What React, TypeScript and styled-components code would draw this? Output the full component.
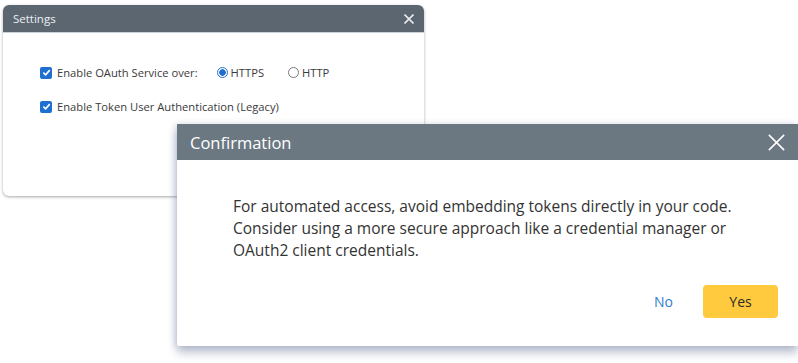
import styled, { createGlobalStyle } from 'styled-components';

const GlobalStyle = createGlobalStyle`
  html, body {
    margin: 0;
    padding: 0;
    background: #ffffff;
    font-family: "Open Sans", "Noto Sans", sans-serif;
    color: #333333;
  }
`;

export default function App() {
  return (
    <Desktop>
      <GlobalStyle />
      <SettingsWindow>
        <SettingsHeader>
          <SettingsTitle>Settings</SettingsTitle>
          <CloseIcon size={10} stroke={1.6} color="#e8ecef" />
        </SettingsHeader>
        <SettingsBody>
          <OptionRow>
            <Checkbox />
            <OptionLabel>Enable OAuth Service over:</OptionLabel>
            <RadioGroup>
              <RadioOption>
                <Radio checked />
                <span>HTTPS</span>
              </RadioOption>
              <RadioOption>
                <Radio />
                <span>HTTP</span>
              </RadioOption>
            </RadioGroup>
          </OptionRow>
          <OptionRow>
            <Checkbox />
            <OptionLabel>Enable Token User Authentication (Legacy)</OptionLabel>
          </OptionRow>
        </SettingsBody>
      </SettingsWindow>

      <ConfirmWindow>
        <ConfirmHeader>
          <ConfirmTitle>Confirmation</ConfirmTitle>
          <CloseIcon size={17} stroke={1.5} color="#ffffff" />
        </ConfirmHeader>
        <ConfirmBody>
          <Message>
            For automated access, avoid embedding tokens directly in your code.
            <br />
            Consider using a more secure approach like a credential manager or
            <br />
            OAuth2 client credentials.
          </Message>
          <Actions>
            <TextButton>No</TextButton>
            <PrimaryButton>Yes</PrimaryButton>
          </Actions>
        </ConfirmBody>
      </ConfirmWindow>
    </Desktop>
  );
}

function CloseIcon({ size, stroke, color }: { size: number; stroke: number; color: string }) {
  return (
    <svg width={size} height={size} viewBox="0 0 10 10" fill="none">
      <path d="M0.5 0.5 L9.5 9.5 M9.5 0.5 L0.5 9.5" stroke={color} strokeWidth={(stroke * 10) / size} />
    </svg>
  );
}

function Checkbox() {
  return (
    <CheckBoxBox>
      <svg width="9" height="9" viewBox="0 0 10 10" fill="none">
        <path d="M1.5 5.2 L4 7.6 L8.6 2.4" stroke="#ffffff" strokeWidth="1.8" />
      </svg>
    </CheckBoxBox>
  );
}

const Desktop = styled.div`
  position: relative;
  width: 798px;
  height: 363px;
  overflow: hidden;
  background: #ffffff;
`;

const SettingsWindow = styled.div`
  position: absolute;
  left: 3px;
  top: 5px;
  width: 421px;
  height: 191px;
  background: #ffffff;
  border-radius: 6px;
  overflow: hidden;
  box-shadow: 0 1px 3px rgba(0, 0, 0, 0.35);
  display: flex;
  flex-direction: column;
`;

const SettingsHeader = styled.div`
  height: 27px;
  background: #5b6670;
  display: flex;
  align-items: center;
  justify-content: space-between;
  padding: 0 10px 0 10px;
  border-bottom: 1px solid #c8d0d8;
`;

const SettingsTitle = styled.span`
  color: #eef1f3;
  font-size: 11.5px;
`;

const SettingsBody = styled.div`
  padding: 28px 0 0 37px;
  display: flex;
  flex-direction: column;
  gap: 11px;
`;

const OptionRow = styled.div`
  display: flex;
  align-items: center;
  height: 23px;
  font-size: 11.2px;
  color: #3a3a3a;
`;

const CheckBoxBox = styled.span`
  width: 12px;
  height: 12px;
  border-radius: 2px;
  background: #1f6fd1;
  display: inline-flex;
  align-items: center;
  justify-content: center;
  margin-right: 5px;
`;

const OptionLabel = styled.span`
  white-space: nowrap;
`;

const RadioGroup = styled.div`
  display: flex;
  gap: 24px;
  margin-left: 19px;
`;

const RadioOption = styled.label`
  display: flex;
  align-items: center;
  gap: 3px;
`;

const Radio = styled.span<{ checked?: boolean }>`
  width: 11px;
  height: 11px;
  box-sizing: border-box;
  border-radius: 50%;
  border: 1px solid ${(p) => (p.checked ? '#1f6fd1' : '#7a7a7a')};
  background: ${(p) => (p.checked ? 'radial-gradient(circle, #1f6fd1 0 3px, #ffffff 3.5px)' : '#ffffff')};
`;

const ConfirmWindow = styled.div`
  position: absolute;
  left: 177px;
  top: 124px;
  width: 621px;
  height: 222px;
  background: #ffffff;
  border-radius: 2px 0 0 2px;
  box-shadow: 0 7px 10px rgba(70, 85, 130, 0.35), -2px 0 6px rgba(70, 85, 130, 0.2);
  display: flex;
  flex-direction: column;
`;

const ConfirmHeader = styled.div`
  height: 36px;
  background: #6b7882;
  display: flex;
  align-items: center;
  justify-content: space-between;
  padding: 0 13px 0 13px;
`;

const ConfirmTitle = styled.span`
  color: #ffffff;
  font-size: 16.5px;
`;

const ConfirmBody = styled.div`
  flex: 1;
  display: flex;
  flex-direction: column;
  padding: 35px 20px 0 56px;
`;

const Message = styled.p`
  margin: 0;
  font-size: 15.5px;
  line-height: 22px;
  color: #333333;
  white-space: nowrap;
`;

const Actions = styled.div`
  display: flex;
  justify-content: flex-end;
  align-items: center;
  gap: 30px;
  margin-top: 24px;
`;

const TextButton = styled.button`
  border: none;
  background: none;
  padding: 0;
  font-family: inherit;
  font-size: 14px;
  color: #2f7fd0;
`;

const PrimaryButton = styled.button`
  width: 75px;
  height: 33px;
  border: none;
  border-radius: 4px;
  background: #ffca3e;
  font-family: inherit;
  font-size: 14px;
  color: #2b2b2b;
`;
